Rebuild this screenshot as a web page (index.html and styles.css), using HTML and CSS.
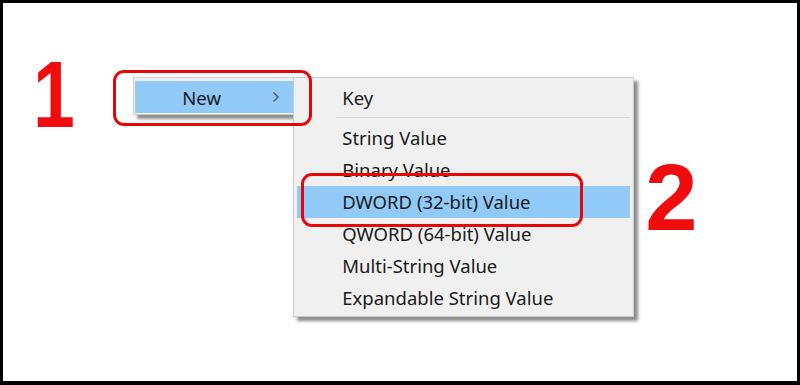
FILE: index.html
```html
<!DOCTYPE html>
<html lang="en">

<head>
    <meta charset="UTF-8">
    <title>New DWORD Value</title>
    <link rel="stylesheet" href="styles.css">
</head>

<body>

    <div class="frame">
        <div class="step step_one">1</div>

        <div class="new_menu">
            <div class="new_item">
                <span>New</span>
                <svg class="arrow" width="8" height="12" viewBox="0 0 8 12">
                    <path d="M1.5 1.5 L6 6 L1.5 10.5" fill="none" stroke="#555" stroke-width="1.4"/>
                </svg>
            </div>
        </div>

        <div class="sub_menu">
            <div class="item">Key</div>
            <div class="separator"></div>
            <div class="item">String Value</div>
            <div class="item">Binary Value</div>
            <div class="item selected">DWORD (32-bit) Value</div>
            <div class="item">QWORD (64-bit) Value</div>
            <div class="item">Multi-String Value</div>
            <div class="item">Expandable String Value</div>
        </div>

        <div class="step step_two">2</div>

        <!-- red marks drawn over the menus -->
        <div class="mark mark_new"></div>
        <div class="mark mark_dword"></div>
    </div>

</body>

</html>
```

FILE: styles.css
```css
*{
    padding: 0px;
    margin: 0px;
    box-sizing: border-box;
}

body{
    width: 800px;
    height: 385px;
    background-color: white;
}

.frame{
    position: relative;
    width: 800px;
    height: 385px;
    border: 3px solid black;
    border-bottom-width: 4px;
    display: flex;
    align-items: flex-start;
    font-family: "Noto Sans", "Open Sans", sans-serif;
    color: #1a1a1a;
}

.step{
    font-family: "Liberation Sans", Arial, sans-serif;
    font-weight: bold;
    font-size: 94px;
    line-height: 1;
    color: #f00c0c;
}

.step_one{
    margin-top: 45px;
    margin-left: 30px;
    transform: scaleX(0.8);
    transform-origin: left top;
}

.step_two{
    margin-top: 148px;
    margin-left: 11px;
}

.new_menu{
    margin-top: 74px;
    margin-left: 48px;
    width: 164px;
    padding: 3px 0px 1px 1px;
    background-color: #f0f0f0;
    border: 1px solid #cfcfcf;
    box-shadow: 4px 4px 3px rgba(0, 0, 0, 0.45);
}

.new_item{
    height: 32px;
    background-color: #91c9f7;
    display: flex;
    align-items: center;
    padding-left: 47px;
    font-size: 18.5px;
}

.new_item span{
    flex: 1;
}

.arrow{
    margin-right: 16px;
}

.sub_menu{
    position: relative;
    z-index: 1;
    margin-top: 74px;
    margin-left: -4px;
    width: 341px;
    padding: 4px 3px 2px 3px;
    background-color: #f0f0f0;
    border: 1px solid #cacaca;
    box-shadow: 4px 4px 3px rgba(0, 0, 0, 0.45);
    font-size: 18.5px;
}

.item{
    height: 32px;
    line-height: 32px;
    padding-left: 45px;
}

.item.selected{
    background-color: #91c9f7;
}

.separator{
    height: 1px;
    margin: 3px 0px 4px 39px;
    background-color: #d7d7d7;
}

.mark{
    position: absolute;
    z-index: 2;
    border: 3px solid #e60606;
    border-radius: 11px;
}

.mark_new{
    left: 110px;
    top: 67px;
    width: 199px;
    height: 56px;
}

.mark_dword{
    left: 298px;
    top: 170px;
    width: 282px;
    height: 54px;
}
```
